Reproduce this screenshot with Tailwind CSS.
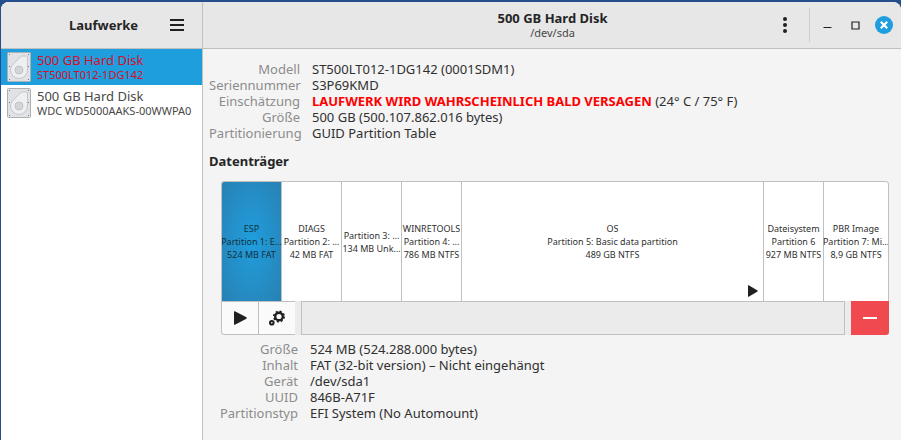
<!DOCTYPE html>
<html lang="de">
<head>
    <meta charset="UTF-8">
    <meta name="viewport" content="width=device-width, initial-scale=1.0">
    <title>Laufwerke</title>
    <script src="https://cdn.jsdelivr.net/npm/@tailwindcss/browser@4"></script>
</head>
<body class="bg-[#254f8a] min-h-screen flex pt-[2px] pl-px font-['Noto_Sans',sans-serif] text-[13px] leading-4 text-[#303030]">
<svg class="hidden">
    <symbol id="disk" viewBox="0 0 24 30">
        <rect x=".5" y=".5" width="23" height="29" rx="1" fill="#e1e2e5" stroke="#adafb1"/>
        <path d="M15.500 4H19.500Q20.500 4 20.500 5V18A8.500 8.500 0 0 1 3.500 18Q3.500 15.500 5 13.500L13 5.200Q14 4 15.500 4Z" fill="#eeeff1" stroke="#c4c6ca"/>
        <circle cx="12" cy="18" r="4" fill="#d3d5d8" stroke="#c0c2c5"/>
        <path d="M2 2h1v1H2zM21 2h1v1h-1zM2 14h1v1H2zM21 14h1v1h-1zM2 27h1v1H2zM21 27h1v1h-1z" fill="#77797c"/>
    </symbol>
</svg>
<div class="flex-1 flex rounded-t-lg overflow-hidden bg-[#f4f4f4]">
    <aside class="w-[202px] shrink-0 flex flex-col border-r border-[#c0c0c0] bg-white">
        <header class="h-[47px] flex items-center bg-[#e7e7e7] border-b border-[#c0c0c0]">
            <h1 class="flex-1 pl-11 text-center font-bold text-[#252525]">Laufwerke</h1>
            <button type="button" aria-label="Menü" class="mr-[18px] ml-2">
                <svg class="w-[14px] h-3" viewBox="0 0 14 12" fill="#202020"><path d="M0 0h14v2H0zM0 5h14v2H0zM0 10h14v2H0z"/></svg>
            </button>
        </header>
        <button type="button" class="h-9 pl-[6px] flex items-center gap-[6px] text-left bg-[#1f9ede] text-[#d40f2a]">
            <svg class="w-6 h-[30px]"><use href="#disk"/></svg>
            <span>
                <span class="block">500 GB Hard Disk</span>
                <span class="block text-[11px] leading-[14px]">ST500LT012-1DG142</span>
            </span>
        </button>
        <button type="button" class="h-9 pl-[6px] flex items-center gap-[6px] text-left text-[#484848]">
            <svg class="w-6 h-[30px]"><use href="#disk"/></svg>
            <span>
                <span class="block">500 GB Hard Disk</span>
                <span class="block text-[11px] leading-[14px]">WDC WD5000AAKS-00WWPA0</span>
            </span>
        </button>
    </aside>

    <main class="flex-1 min-w-0">
        <header class="h-[47px] flex items-center bg-[#e7e7e7] border-b border-[#c0c0c0]">
            <div class="flex-1 pl-[137px] text-center">
                <h2 class="font-bold text-[#252525]">500 GB Hard Disk</h2>
                <p class="text-[11px] leading-[14px] text-[#484848]">/dev/sda</p>
            </div>
            <button type="button" aria-label="Laufwerksoptionen" class="w-10 flex justify-center">
                <svg class="w-1 h-4" viewBox="0 0 4 16" fill="#202020"><circle cx="2" cy="2" r="2"/><circle cx="2" cy="8" r="2"/><circle cx="2" cy="14" r="2"/></svg>
            </button>
            <div class="ml-1 h-[34px] pl-[13px] pr-2 flex items-center gap-[19px] border-l border-[#cfcfcf]">
                <button type="button" aria-label="Minimieren"><svg class="w-[9px] h-[9px]" viewBox="0 0 9 9"><path d="M.5 6.500h8" stroke="#202020"/></svg></button>
                <button type="button" aria-label="Maximieren"><svg class="w-[9px] h-[9px]" viewBox="0 0 9 9"><path d="M1 1h7v7H1z" fill="none" stroke="#202020" stroke-width="1.200"/></svg></button>
                <button type="button" aria-label="Schließen" class="-ml-1 size-[18px] rounded-full bg-[#1f9ede]">
                    <svg class="size-[18px]" viewBox="0 0 18 18"><path d="M5.800 5.800l6.400 6.400M12.200 5.800l-6.400 6.400" stroke="#fff" stroke-width="2.200"/></svg>
                </button>
            </div>
        </header>

        <div class="pt-3 pl-[6px] pr-3">
            <dl class="grid grid-cols-[91px_1fr] gap-x-3">
                <dt class="text-right text-[#8c8c8c]">Modell</dt>
                <dd>ST500LT012-1DG142 (0001SDM1)</dd>
                <dt class="text-right text-[#8c8c8c]">Seriennummer</dt>
                <dd>S3P69KMD</dd>
                <dt class="text-right text-[#8c8c8c]">Einschätzung</dt>
                <dd class="whitespace-nowrap"><strong class="text-[#ff0000]">LAUFWERK WIRD WAHRSCHEINLICH BALD VERSAGEN</strong> (24° C / 75° F)</dd>
                <dt class="text-right text-[#8c8c8c]">Größe</dt>
                <dd>500 GB (500.107.862.016 bytes)</dd>
                <dt class="text-right text-[#8c8c8c]">Partitionierung</dt>
                <dd>GUID Partition Table</dd>
            </dl>

            <h3 class="mt-3 font-bold text-[#252525]">Datenträger</h3>

            <div class="mt-3 ml-3 rounded-[3px] overflow-hidden bg-[#ebebeb]">
                <div class="h-[120px] flex border border-b-0 border-[#c0c0c0] rounded-t-[3px] overflow-hidden divide-x divide-[#c0c0c0] bg-white text-[9px] leading-[13px] whitespace-nowrap">
                    <button type="button" class="w-[60px] flex flex-col items-center justify-center bg-radial from-[#1f9ede] to-[#2781b3] text-[#12303f]">
                        <span>ESP</span><span>Partition 1: E…</span><span>524 MB FAT</span>
                    </button>
                    <button type="button" class="w-[60px] flex flex-col items-center justify-center">
                        <span>DIAGS</span><span>Partition 2: …</span><span>42 MB FAT</span>
                    </button>
                    <button type="button" class="w-[60px] flex flex-col items-center justify-center">
                        <span>Partition 3: …</span><span>134 MB Unk…</span>
                    </button>
                    <button type="button" class="w-[60px] flex flex-col items-center justify-center">
                        <span>WINRETOOLS</span><span>Partition 4: …</span><span>786 MB NTFS</span>
                    </button>
                    <button type="button" class="relative flex-1 flex flex-col items-center justify-center">
                        <span>OS</span><span>Partition 5: Basic data partition</span><span>489 GB NTFS</span>
                        <svg class="absolute right-[5px] bottom-1 w-[10px] h-3" viewBox="0 0 10 12" fill="#202020"><path d="M0 .500Q0 0 .700.300L9.500 5.500Q10 6 9.500 6.500L.700 11.700Q0 12 0 11.500Z"/></svg>
                    </button>
                    <button type="button" class="w-[60px] flex flex-col items-center justify-center">
                        <span>Dateisystem</span><span>Partition 6</span><span>927 MB NTFS</span>
                    </button>
                    <button type="button" class="w-16 flex flex-col items-center justify-center">
                        <span>PBR Image</span><span>Partition 7: Mi…</span><span>8,9 GB NTFS</span>
                    </button>
                </div>
                <div class="h-[34px] flex">
                    <div class="w-[74px] flex divide-x divide-[#c0c0c0] border border-r-0 border-[#c0c0c0] rounded-bl-[3px] bg-[#fafafa]">
                        <button type="button" aria-label="Einhängen" class="flex-1 flex items-center justify-center">
                            <svg class="w-[13px] h-[14px]" viewBox="0 0 13 14" fill="#202020"><path d="M0 .800Q0 0 .900.200L12.400 6.300Q13 7 12.400 7.700L.900 13.800Q0 14 0 13.200Z"/></svg>
                        </button>
                        <button type="button" aria-label="Partitionsoptionen" class="flex-1 flex items-center justify-center">
                            <svg class="size-4" viewBox="0 0 16 16" fill="none" stroke="#202020">
                                <circle cx="10" cy="6.500" r="3.800" stroke-width="2.400"/>
                                <circle cx="10" cy="6.500" r="5.200" stroke-width="1.600" stroke-dasharray="2.040 2.044"/>
                                <circle cx="2.800" cy="12.700" r="1.800" stroke-width="2"/>
                            </svg>
                        </button>
                    </div>
                    <div class="flex-1 mx-[6px] border border-[#c0c0c0]"></div>
                    <button type="button" aria-label="Partition löschen" class="w-[38px] flex items-center justify-center bg-[#f04a50]">
                        <svg class="w-[14px] h-[2px]" viewBox="0 0 14 2" fill="#fff"><path d="M0 0h14v2H0z"/></svg>
                    </button>
                </div>
            </div>

            <dl class="mt-[6px] grid grid-cols-[89px_1fr] gap-x-3">
                <dt class="text-right text-[#8c8c8c]">Größe</dt>
                <dd>524 MB (524.288.000 bytes)</dd>
                <dt class="text-right text-[#8c8c8c]">Inhalt</dt>
                <dd>FAT (32-bit version) – Nicht eingehängt</dd>
                <dt class="text-right text-[#8c8c8c]">Gerät</dt>
                <dd>/dev/sda1</dd>
                <dt class="text-right text-[#8c8c8c]">UUID</dt>
                <dd>846B-A71F</dd>
                <dt class="text-right text-[#8c8c8c]">Partitionstyp</dt>
                <dd>EFI System (No Automount)</dd>
            </dl>
        </div>
    </main>
</div>
</body>
</html>
